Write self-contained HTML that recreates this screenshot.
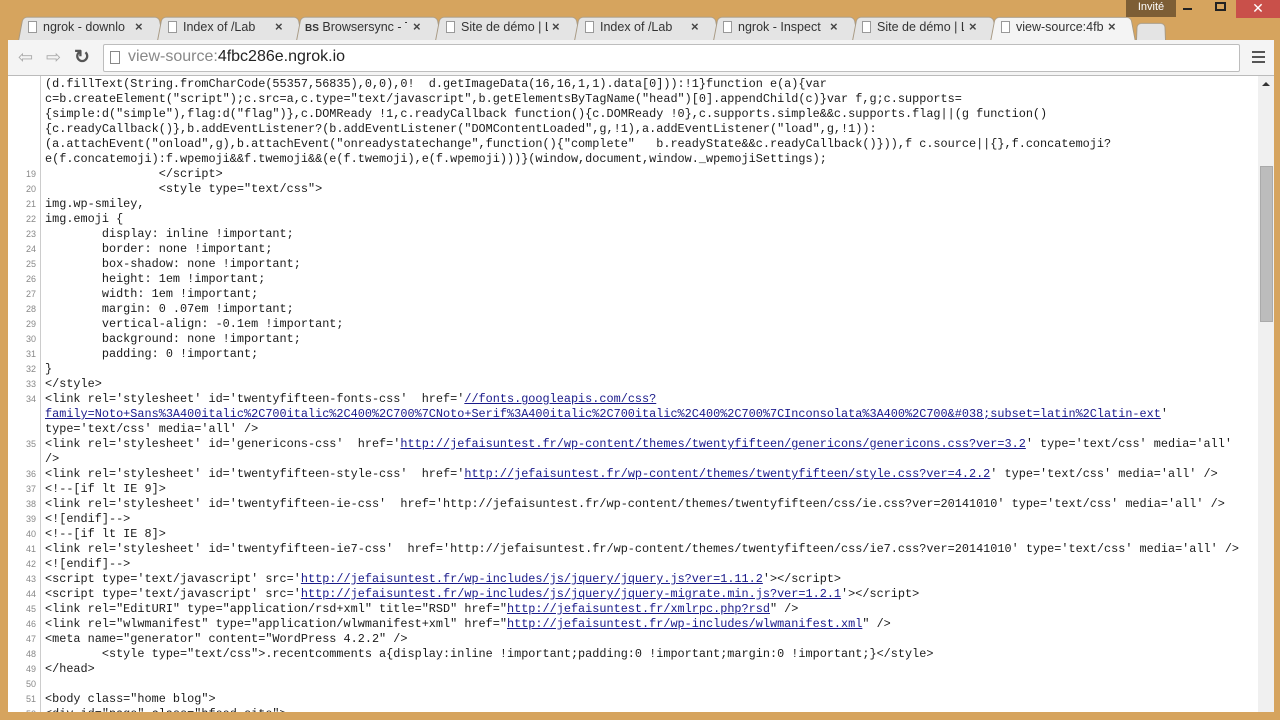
<!DOCTYPE html>
<html><head><meta charset="utf-8"><style>
*{margin:0;padding:0;box-sizing:border-box}
body{width:1280px;height:720px;overflow:hidden;background:#d6a45e;font-family:"Liberation Sans",sans-serif;position:relative}
.tab{position:absolute;top:15px;height:26px;width:146px;background:#e4e4e4;border:1px solid #a89a84;border-bottom:none;border-radius:5px 5px 0 0;transform:perspective(40px) rotateX(6deg);transform-origin:bottom}
.tl{position:absolute;top:20px;font-size:12.5px;color:#333;white-space:nowrap;overflow:hidden}
.tl .ic{display:inline-block;width:9px;height:12px;border:1px solid #999;margin-right:6px;vertical-align:-2px;background:#fff}
.x{position:absolute;top:19px;font-size:13px;color:#444;font-weight:bold}
#tb{position:absolute;left:8px;top:40px;width:1266px;height:36px;background:#f4f4f4;border-bottom:1px solid #bbb}
#omni{position:absolute;left:103px;top:44px;width:1137px;height:28px;background:#fff;border:1px solid #bdbdbd;border-radius:2px}
#content{position:absolute;left:8px;top:76px;width:1266px;height:636px;background:#fff;overflow:hidden}
#gut{position:absolute;left:0;top:0;width:33px;height:100%;border-right:1px solid #ccc;background:#fff}
.l{position:absolute;left:0;height:15px;line-height:15px;font-family:"Liberation Mono",monospace;font-size:11.85px;color:#1a1a1a;white-space:pre}
.n{position:absolute;left:0;width:28px;text-align:right;font-size:9px;color:#888;font-family:"Liberation Sans",sans-serif;line-height:15px}
.t{position:absolute;left:37px}
a{color:#1a1a8a;text-decoration:underline}
#sb{position:absolute;left:1258px;top:76px;width:16px;height:636px;background:#f0f0f0}
#thumb{position:absolute;left:1260px;top:166px;width:13px;height:156px;background:#bcbcbc;border:1px solid #aaa}
</style></head><body>
<div class="tab" style="left:18px"></div>
<div class="tab" style="left:157px"></div>
<div class="tab" style="left:296px"></div>
<div class="tab" style="left:435px"></div>
<div class="tab" style="left:574px"></div>
<div class="tab" style="left:713px"></div>
<div class="tab" style="left:852px"></div>
<div class="tab" style="left:990px;background:#f4f4f4;height:27px"></div>
<div class="tab" style="left:1136px;width:30px;height:18px;top:22px"></div>
<div class="tl" style="left:28px;width:102px"><span class="ic"></span>ngrok - downlo</div><span class="x" style="left:135px">×</span>
<div class="tl" style="left:168px;width:102px"><span class="ic"></span>Index of /Lab</div><span class="x" style="left:275px">×</span>
<div class="tl" style="left:305px;width:102px"><b style="font-size:10px">BS</b> Browsersync - T</div><span class="x" style="left:413px">×</span>
<div class="tl" style="left:446px;width:102px"><span class="ic"></span>Site de démo | L</div><span class="x" style="left:552px">×</span>
<div class="tl" style="left:585px;width:102px"><span class="ic"></span>Index of /Lab</div><span class="x" style="left:691px">×</span>
<div class="tl" style="left:723px;width:102px"><span class="ic"></span>ngrok - Inspect</div><span class="x" style="left:830px">×</span>
<div class="tl" style="left:862px;width:102px"><span class="ic"></span>Site de démo | L</div><span class="x" style="left:969px">×</span>
<div class="tl" style="left:1001px;width:102px"><span class="ic"></span>view-source:4fb</div><span class="x" style="left:1108px">×</span>
<div style="position:absolute;left:1126px;top:0;width:50px;height:17px;background:#7d5e35;color:#fff;font-size:11px;text-align:center;line-height:15px">Invité</div>
<div style="position:absolute;left:1183px;top:8px;width:9px;height:2px;background:#222"></div>
<div style="position:absolute;left:1215px;top:2px;width:11px;height:9px;border:2px solid #222"></div>
<div style="position:absolute;left:1236px;top:0;width:44px;height:18px;background:#c9504a;color:#fff;text-align:center;font-size:14px;line-height:17px">✕</div>
<div id="tb"></div>
<div style="position:absolute;left:18px;top:47px;font-size:18px;color:#aaa">⇦</div>
<div style="position:absolute;left:46px;top:47px;font-size:18px;color:#aaa">⇨</div>
<div style="position:absolute;left:74px;top:46px;font-size:19px;color:#555;font-weight:bold">↻</div>
<div id="omni"></div>
<div style="position:absolute;left:110px;top:51px;width:10px;height:13px;border:1px solid #888"></div>
<div style="position:absolute;left:128px;top:48px;font-size:16px;color:#888">view-source:<span style="color:#222">4fbc286e.ngrok.io</span></div>
<div style="position:absolute;left:1252px;top:51px;width:13px;height:2px;background:#555;box-shadow:0 5px 0 #555,0 10px 0 #555"></div>
<div id="content">
<div id="gut"></div>
<div class="l" style="top:1px"><span class="t">(d.fillText(String.fromCharCode(55357,56835),0,0),0!  d.getImageData(16,16,1,1).data[0])):!1}function e(a){var</span></div>
<div class="l" style="top:16px"><span class="t">c=b.createElement("script");c.src=a,c.type="text/javascript",b.getElementsByTagName("head")[0].appendChild(c)}var f,g;c.supports=</span></div>
<div class="l" style="top:31px"><span class="t">{simple:d("simple"),flag:d("flag")},c.DOMReady !1,c.readyCallback function(){c.DOMReady !0},c.supports.simple&amp;&amp;c.supports.flag||(g function()</span></div>
<div class="l" style="top:46px"><span class="t">{c.readyCallback()},b.addEventListener?(b.addEventListener("DOMContentLoaded",g,!1),a.addEventListener("load",g,!1)):</span></div>
<div class="l" style="top:61px"><span class="t">(a.attachEvent("onload",g),b.attachEvent("onreadystatechange",function(){"complete"   b.readyState&amp;&amp;c.readyCallback()})),f c.source||{},f.concatemoji?</span></div>
<div class="l" style="top:76px"><span class="t">e(f.concatemoji):f.wpemoji&amp;&amp;f.twemoji&amp;&amp;(e(f.twemoji),e(f.wpemoji)))}(window,document,window._wpemojiSettings);</span></div>
<div class="l" style="top:91px"><span class="n">19</span><span class="t">                &lt;/script&gt;</span></div>
<div class="l" style="top:106px"><span class="n">20</span><span class="t">                &lt;style type="text/css"&gt;</span></div>
<div class="l" style="top:121px"><span class="n">21</span><span class="t">img.wp-smiley,</span></div>
<div class="l" style="top:136px"><span class="n">22</span><span class="t">img.emoji {</span></div>
<div class="l" style="top:151px"><span class="n">23</span><span class="t">        display: inline !important;</span></div>
<div class="l" style="top:166px"><span class="n">24</span><span class="t">        border: none !important;</span></div>
<div class="l" style="top:181px"><span class="n">25</span><span class="t">        box-shadow: none !important;</span></div>
<div class="l" style="top:196px"><span class="n">26</span><span class="t">        height: 1em !important;</span></div>
<div class="l" style="top:211px"><span class="n">27</span><span class="t">        width: 1em !important;</span></div>
<div class="l" style="top:226px"><span class="n">28</span><span class="t">        margin: 0 .07em !important;</span></div>
<div class="l" style="top:241px"><span class="n">29</span><span class="t">        vertical-align: -0.1em !important;</span></div>
<div class="l" style="top:256px"><span class="n">30</span><span class="t">        background: none !important;</span></div>
<div class="l" style="top:271px"><span class="n">31</span><span class="t">        padding: 0 !important;</span></div>
<div class="l" style="top:286px"><span class="n">32</span><span class="t">}</span></div>
<div class="l" style="top:301px"><span class="n">33</span><span class="t">&lt;/style&gt;</span></div>
<div class="l" style="top:316px"><span class="n">34</span><span class="t">&lt;link rel='stylesheet' id='twentyfifteen-fonts-css'  href='<a>//fonts.googleapis.com/css?</a></span></div>
<div class="l" style="top:331px"><span class="t"><a>family=Noto+Sans%3A400italic%2C700italic%2C400%2C700%7CNoto+Serif%3A400italic%2C700italic%2C400%2C700%7CInconsolata%3A400%2C700&amp;#038;subset=latin%2Clatin-ext</a>'</span></div>
<div class="l" style="top:346px"><span class="t">type='text/css' media='all' /&gt;</span></div>
<div class="l" style="top:361px"><span class="n">35</span><span class="t">&lt;link rel='stylesheet' id='genericons-css'  href='<a>http://jefaisuntest.fr/wp-content/themes/twentyfifteen/genericons/genericons.css?ver=3.2</a>' type='text/css' media='all'</span></div>
<div class="l" style="top:376px"><span class="t">/&gt;</span></div>
<div class="l" style="top:391px"><span class="n">36</span><span class="t">&lt;link rel='stylesheet' id='twentyfifteen-style-css'  href='<a>http://jefaisuntest.fr/wp-content/themes/twentyfifteen/style.css?ver=4.2.2</a>' type='text/css' media='all' /&gt;</span></div>
<div class="l" style="top:406px"><span class="n">37</span><span class="t">&lt;!--[if lt IE 9]&gt;</span></div>
<div class="l" style="top:421px"><span class="n">38</span><span class="t">&lt;link rel='stylesheet' id='twentyfifteen-ie-css'  href='http://jefaisuntest.fr/wp-content/themes/twentyfifteen/css/ie.css?ver=20141010' type='text/css' media='all' /&gt;</span></div>
<div class="l" style="top:436px"><span class="n">39</span><span class="t">&lt;![endif]--&gt;</span></div>
<div class="l" style="top:451px"><span class="n">40</span><span class="t">&lt;!--[if lt IE 8]&gt;</span></div>
<div class="l" style="top:466px"><span class="n">41</span><span class="t">&lt;link rel='stylesheet' id='twentyfifteen-ie7-css'  href='http://jefaisuntest.fr/wp-content/themes/twentyfifteen/css/ie7.css?ver=20141010' type='text/css' media='all' /&gt;</span></div>
<div class="l" style="top:481px"><span class="n">42</span><span class="t">&lt;![endif]--&gt;</span></div>
<div class="l" style="top:496px"><span class="n">43</span><span class="t">&lt;script type='text/javascript' src='<a>http://jefaisuntest.fr/wp-includes/js/jquery/jquery.js?ver=1.11.2</a>'&gt;&lt;/script&gt;</span></div>
<div class="l" style="top:511px"><span class="n">44</span><span class="t">&lt;script type='text/javascript' src='<a>http://jefaisuntest.fr/wp-includes/js/jquery/jquery-migrate.min.js?ver=1.2.1</a>'&gt;&lt;/script&gt;</span></div>
<div class="l" style="top:526px"><span class="n">45</span><span class="t">&lt;link rel="EditURI" type="application/rsd+xml" title="RSD" href="<a>http://jefaisuntest.fr/xmlrpc.php?rsd</a>" /&gt;</span></div>
<div class="l" style="top:541px"><span class="n">46</span><span class="t">&lt;link rel="wlwmanifest" type="application/wlwmanifest+xml" href="<a>http://jefaisuntest.fr/wp-includes/wlwmanifest.xml</a>" /&gt;</span></div>
<div class="l" style="top:556px"><span class="n">47</span><span class="t">&lt;meta name="generator" content="WordPress 4.2.2" /&gt;</span></div>
<div class="l" style="top:571px"><span class="n">48</span><span class="t">        &lt;style type="text/css"&gt;.recentcomments a{display:inline !important;padding:0 !important;margin:0 !important;}&lt;/style&gt;</span></div>
<div class="l" style="top:586px"><span class="n">49</span><span class="t">&lt;/head&gt;</span></div>
<div class="l" style="top:601px"><span class="n">50</span><span class="t"></span></div>
<div class="l" style="top:616px"><span class="n">51</span><span class="t">&lt;body class="home blog"&gt;</span></div>
<div class="l" style="top:631px"><span class="n">52</span><span class="t">&lt;div id="page" class="hfeed site"&gt;</span></div>
</div>
<div id="sb"></div>
<div style="position:absolute;left:1262px;top:82px;width:0;height:0;border-left:4px solid transparent;border-right:4px solid transparent;border-bottom:4px solid #333"></div>
<div id="thumb"></div>
</body></html>
